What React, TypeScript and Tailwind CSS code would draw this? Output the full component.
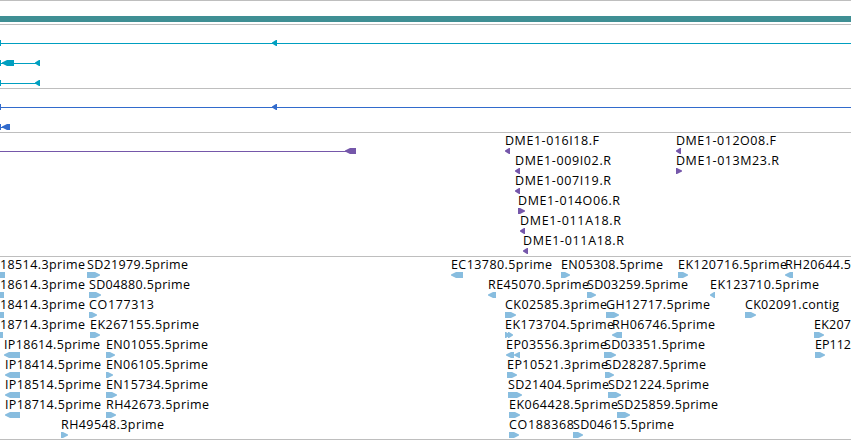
type Feature = { label: string; x: number; end: number; from: number; to: number; dir: "L" | "R" | "B" };
type Row = Feature[];

const f = (label: string, x: number, end: number, from: number, to: number, dir: Feature["dir"]): Feature => ({
  label, x, end, from, to, dir,
});

const bacRows: Row[] = [
  [f("DME1-016I18.F", 505, 599, 505, 510, "L"), f("DME1-012O08.F", 676, 776, 676, 681, "L")],
  [f("DME1-009I02.R", 515, 611, 515, 520, "L"), f("DME1-013M23.R", 676, 779, 676, 682, "R")],
  [f("DME1-007I19.R", 515, 611, 515, 520, "L")],
  [f("DME1-014O06.R", 518, 620, 518, 525, "R")],
  [f("DME1-011A18.R", 520, 621, 520, 525, "L")],
  [f("DME1-011A18.R", 523, 624, 523, 528, "L")],
];

const estRows: Row[] = [
  [
    f("18514.3prime", 0, 85, 0, 5, "B"), f("SD21979.5prime", 87, 188, 87, 100, "R"),
    f("EC13780.5prime", 451, 552, 451, 463, "L"), f("EN05308.5prime", 561, 663, 561, 570, "R"),
    f("EK120716.5prime", 678, 787, 678, 688, "R"), f("RH20644.5", 785, 851, 785, 793, "L"),
  ],
  [
    f("18614.3prime", 0, 85, 0, 4, "B"), f("SD04880.5prime", 89, 190, 89, 101, "R"),
    f("RE45070.5prime", 488, 589, 488, 496, "L"), f("SD03259.5prime", 587, 688, 587, 596, "R"),
    f("EK123710.5prime", 710, 819, 710, 715, "L"),
  ],
  [
    f("18414.3prime", 0, 85, 0, 4, "B"), f("CO177313", 89, 154, 89, 97, "R"),
    f("CK02585.3prime", 505, 607, 505, 516, "R"), f("GH12717.5prime", 606, 710, 606, 619, "R"),
    f("CK02091.contig", 745, 839, 745, 756, "R"),
  ],
  [
    f("18714.3prime", 0, 85, 0, 3, "B"), f("EK267155.5prime", 90, 199, 90, 100, "R"),
    f("EK173704.5prime", 505, 614, 505, 510, "R"), f("", 0, 0, 508, 513, "R"),
    f("RH06746.5prime", 612, 715, 612, 622, "L"), f("EK207", 814, 851, 814, 824, "R"),
  ],
  [
    f("IP18614.5prime", 4, 100, 4, 20, "L"), f("EN01055.5prime", 106, 208, 106, 115, "R"),
    f("EP03556.3prime", 506, 607, 506, 514, "L"), f("", 0, 0, 514, 520, "L"),
    f("SD03351.5prime", 604, 705, 604, 616, "R"), f("EP112", 815, 851, 815, 825, "R"),
  ],
  [
    f("IP18414.5prime", 5, 101, 5, 20, "L"), f("EN06105.5prime", 106, 208, 106, 113, "R"),
    f("EP10521.3prime", 507, 608, 507, 517, "R"), f("SD28287.5prime", 605, 706, 605, 614, "R"),
  ],
  [
    f("IP18514.5prime", 5, 101, 5, 20, "L"), f("EN15734.5prime", 106, 208, 106, 117, "R"),
    f("SD21404.5prime", 508, 609, 508, 522, "R"), f("SD21224.5prime", 608, 709, 608, 621, "R"),
  ],
  [
    f("IP18714.5prime", 5, 101, 5, 20, "L"), f("RH42673.5prime", 106, 209, 106, 116, "R"),
    f("EK064428.5prime", 509, 618, 509, 520, "R"), f("SD25859.5prime", 617, 718, 617, 630, "R"),
  ],
  [
    f("RH49548.3prime", 61, 164, 61, 68, "R"), f("CO188368", 509, 574, 509, 519, "R"),
    f("SD04615.5prime", 573, 674, 573, 583, "R"),
  ],
];

function Arrow({ from, to, dir, y }: { from: number; to: number; dir: Feature["dir"]; y: number }) {
  const w = to - from;
  if (dir === "B") return <rect x={from} y={y} width={w} height={6} />;
  const head = Math.min(w, 6);
  const points =
    dir === "L"
      ? `${to},${y} ${to},${y + 6} ${from + head - 1},${y + 6} ${from},${y + 3.5} ${from},${y + 2.5} ${from + head - 1},${y}`
      : `${from},${y} ${from},${y + 6} ${to - head + 1},${y + 6} ${to},${y + 3.5} ${to},${y + 2.5} ${to - head + 1},${y}`;
  return <polygon points={points} />;
}

function LabelledTrack({ rows, className }: { rows: Row[]; className: string }) {
  return (
    <div className={`flex flex-col border-t border-[#bebebe] ${className}`}>
      {rows.map((row, i) => (
        <svg key={i} width="851" height="20" className="block shrink-0 overflow-visible">
          {row.map((item, j) => (
            <g key={j}>
              {item.label && (
                <text x={item.x} y={12} textLength={item.end - item.x} className="fill-black">
                  {item.label}
                </text>
              )}
              <Arrow from={item.from} to={item.to} dir={item.dir} y={15} />
            </g>
          ))}
        </svg>
      ))}
    </div>
  );
}

type Gene = { lineEnd: number; arrows: [number, number][]; tick: boolean };

function GeneTrack({ genes, className }: { genes: Gene[]; className: string }) {
  return (
    <div className={`flex flex-col border-t border-[#bebebe] ${className}`}>
      {genes.map((gene, i) => (
        <svg key={i} width="851" height="20" className="block shrink-0 overflow-visible">
          <rect x="0" y="18" width={gene.lineEnd} height="1" />
          {gene.tick && <rect x="0" y="15" width="1" height="6" />}
          {gene.arrows.map(([from, to]) => (
            <Arrow key={from} from={from} to={to} dir="L" y={15} />
          ))}
        </svg>
      ))}
    </div>
  );
}

export default function App() {
  return (
    <main className="flex h-[440px] w-[851px] flex-col overflow-hidden border-b border-[#bebebe] bg-white font-['Open_Sans',sans-serif] text-[12.5px]">
      <div className="h-6 shrink-0 border-t border-[#bebebe] pt-[15px]">
        <div className="h-1.5 bg-[#3f8f94]" />
      </div>
      <GeneTrack
        className="h-16 shrink-0 fill-[#009fc0]"
        genes={[
          { lineEnd: 851, arrows: [[272, 277]], tick: true },
          { lineEnd: 40, arrows: [[2, 14], [35, 40]], tick: true },
          { lineEnd: 40, arrows: [[35, 40]], tick: true },
        ]}
      />
      <GeneTrack
        className="h-11 shrink-0 fill-[#326bcc]"
        genes={[
          { lineEnd: 851, arrows: [[272, 277]], tick: true },
          { lineEnd: 10, arrows: [[2, 10]], tick: true },
        ]}
      />
      <div className="grid h-[124px] shrink-0 fill-[#7557aa]">
        <div className="col-start-1 row-start-1">
          <GeneTrack className="" genes={[{ lineEnd: 356, arrows: [[345, 356]], tick: false }]} />
        </div>
        <div className="col-start-1 row-start-1">
          <LabelledTrack className="" rows={bacRows} />
        </div>
      </div>
      <LabelledTrack className="h-[183px] shrink-0 fill-[#88bddf]" rows={estRows} />
    </main>
  );
}
